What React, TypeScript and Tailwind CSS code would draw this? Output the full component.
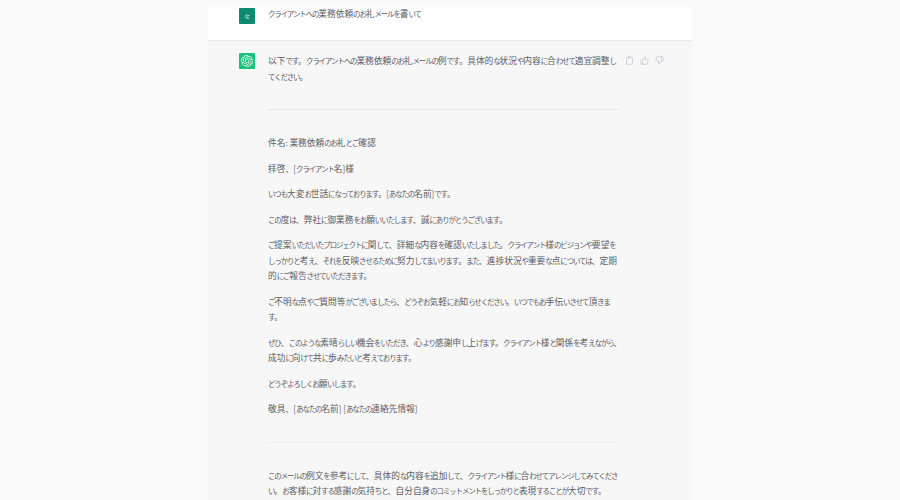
import { Clipboard, ThumbsUp, ThumbsDown } from 'lucide-react'
import { SiOpenai } from 'react-icons/si'

const font = "font-['Noto_Sans_CJK_JP','Liberation_Sans',sans-serif]"

// the reference font has wide kanji and narrow kana, so runs get their own size
function Runs({ text }: { text: string }) {
  const runs = text.match(/[\u4e00-\u9fff]+|[\u3041-\u30ff]+|[^\u4e00-\u9fff\u3041-\u30ff]+/g) ?? []
  return (
    <>
      {runs.map((run, i) => {
        if (/[\u4e00-\u9fff]/.test(run)) return <span key={i} className="text-[8.7px]">{run}</span>
        if (/[\u3041-\u30ff]/.test(run)) return <span key={i} className="text-[7.5px] tracking-[-1.17px]">{run}</span>
        return <span key={i}>{run}</span>
      })}
    </>
  )
}

function Para({ lines, mt }: { lines: string[]; mt: string }) {
  return (
    <div className={mt}>
      {lines.map(line => (
        <div key={line} className="whitespace-nowrap"><Runs text={line} /></div>
      ))}
    </div>
  )
}

export default function App() {
  return (
    <div className={`h-[500px] w-[900px] overflow-hidden bg-[#fafafa] text-[8px] leading-[15.5px] text-[#5c5c62] ${font}`}>
      <div className="mx-auto w-[484px]">
        <div className="h-[41px] border-b border-[#eaeaec] bg-gradient-to-b from-[#f9f9f9] to-white to-[30%]">
          <div className="flex pt-2 pl-[31px]">
            <div className="flex h-4 w-4 items-center justify-center rounded-[1px] bg-[#0d8a72] text-[5px] text-white">な</div>
            <div className="ml-[13px] -mt-[2px]"><Runs text="クライアントへの業務依頼のお礼メールを書いて" /></div>
          </div>
        </div>

        <div className="flex h-[459px] bg-[#f7f7f8] pt-3 pl-[31px]">
          <div className="flex h-4 w-4 shrink-0 items-center justify-center rounded-[1px] bg-[#19c37d] text-white/85">
            <SiOpenai size={12} />
          </div>
          <div className="ml-[13px] w-[350px] shrink-0">
            <Para
              mt=""
              lines={['以下です。クライアントへの業務依頼のお礼メールの例です。具体的な状況や内容に合わせて適宜調整し', 'てください。']}
            />
            <div className="mt-[25px] border-t border-[#e5e5e7]" />
            <Para mt="mt-[25px]" lines={['件名: 業務依頼のお礼とご確認']} />
            <Para mt="mt-[10px]" lines={['拝啓、[クライアント名]様']} />
            <Para mt="mt-[10px]" lines={['いつも大変お世話になっております。[あなたの名前]です。']} />
            <Para mt="mt-[10px]" lines={['この度は、弊社に御業務をお願いいたします、誠にありがとうございます。']} />
            <Para
              mt="mt-[10px]"
              lines={[
                'ご提案いただいたプロジェクトに関して、詳細な内容を確認いたしました。クライアント様のビジョンや要望を',
                'しっかりと考え、それを反映させるために努力してまいります。また、進捗状況や重要な点については、定期',
                '的にご報告させていただきます。',
              ]}
            />
            <Para
              mt="mt-[10px]"
              lines={['ご不明な点やご質問等がございましたら、どうぞお気軽にお知らせください。いつでもお手伝いさせて頂きま', 'す。']}
            />
            <Para
              mt="mt-[10px]"
              lines={['ぜひ、このような素晴らしい機会をいただき、心より感謝申し上げます。クライアント様と関係を考えながら、', '成功に向けて共に歩みたいと考えております。']}
            />
            <Para mt="mt-[10px]" lines={['どうぞよろしくお願いします。']} />
            <Para mt="mt-[10px]" lines={['敬具、[あなたの名前] [あなたの連絡先情報]']} />
            <div className="mt-[25px] border-t border-[#eeeeef]" />
            <Para
              mt="mt-[25px]"
              lines={['このメールの例文を参考にして、具体的な内容を追加して、クライアント様に合わせてアレンジしてみてくださ', 'い。お客様に対する感謝の気持ちと、自分自身のコミットメントをしっかりと表現することが大切です。']}
            />
          </div>
          <div className="ml-[7px] flex h-[15px] shrink-0 items-center gap-[6px] text-[#c5c5d2]">
            <Clipboard size={9} />
            <ThumbsUp size={9} />
            <ThumbsDown size={9} />
          </div>
        </div>
      </div>
    </div>
  )
}
